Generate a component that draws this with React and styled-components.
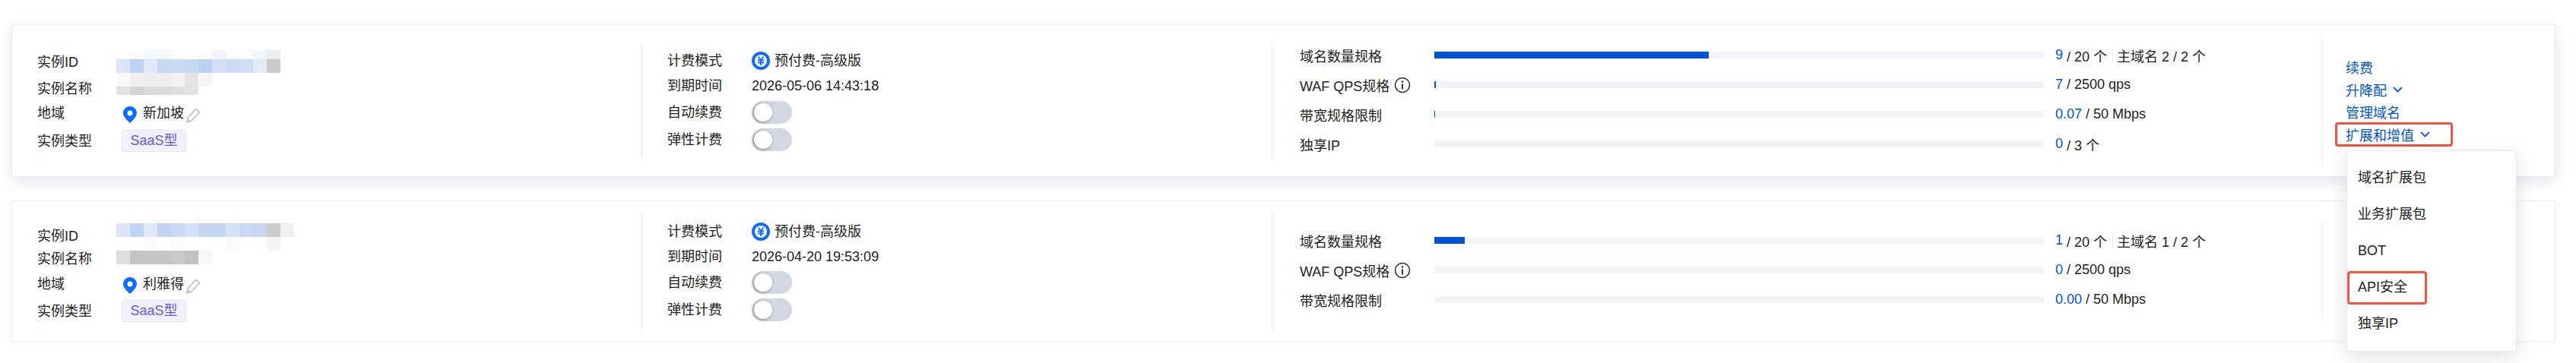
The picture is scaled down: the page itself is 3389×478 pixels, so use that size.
import React from 'react'
import styled, { createGlobalStyle } from 'styled-components'

const GlobalStyle = createGlobalStyle`
  html, body {
    margin: 0;
    padding: 0;
    background: #fff;
  }
  body {
    font-family: "Liberation Sans", "Noto Sans CJK SC", sans-serif;
    font-size: 18px;
    color: #222;
  }
`

const Page = styled.div`
  position: relative;
  width: 3389px;
  height: 478px;
  overflow: hidden;
  box-sizing: border-box;
  padding: 32px 27px 0 15px;
  display: flex;
  flex-direction: column;
  gap: 31px;
`

const Card = styled.section`
  display: flex;
  align-items: center;
  box-sizing: border-box;
  height: ${({ $height }) => $height}px;
  background: #fff;
  border: 1px solid #e9ebf3;
  box-shadow: ${({ $raised }) => ($raised ? '0 6px 18px rgba(40, 50, 90, 0.12)' : 'none')};
`

const Column = styled.div`
  box-sizing: border-box;
  width: ${({ $width }) => $width}px;
  flex: none;
  height: ${({ $height }) => $height}px;
  display: flex;
  flex-direction: column;
  justify-content: center;
  padding-left: ${({ $pad }) => $pad}px;
  ${({ $line }) => $line && 'border-left: 1px solid #e9ebf3;'}
`

const InfoRow = styled.div`
  display: grid;
  grid-template-columns: ${({ $label }) => $label}px 1fr;
  align-items: center;
  height: ${({ $height }) => $height}px;
  margin-bottom: ${({ $gap }) => $gap || 0}px;
  line-height: 24px;
  white-space: nowrap;
`

const Mosaic = styled.div`
  display: flex;
  flex-direction: column;
  align-self: start;
  margin-top: ${({ $offset }) => $offset}px;
`

const MosaicLine = styled.div`
  display: flex;
  height: ${({ $height }) => $height}px;
`

const MosaicCell = styled.span`
  width: 18px;
  height: 100%;
  flex: none;
  background: ${({ $color }) => $color || 'transparent'};
`

const Region = styled.div`
  display: flex;
  align-items: center;
  padding-left: 9px;
`

const RegionName = styled.span`
  margin-left: 8px;
  width: 57px;
`

const PinIcon = styled.svg`
  width: 18px;
  height: 22px;
  flex: none;
  margin-top: 4px;
`

const PencilIcon = styled.svg`
  width: 20px;
  height: 20px;
  flex: none;
  margin-top: 5px;
`

const TypeTag = styled.span`
  justify-self: start;
  margin-left: 7px;
  box-sizing: border-box;
  width: 85px;
  height: 29px;
  line-height: 27px;
  text-align: center;
  background: #f1f0fd;
  border: 1px solid #e6e5f6;
  border-radius: 3px;
  color: #6a5ad6;
`

const Billing = styled.div`
  display: flex;
  align-items: center;
  gap: 6px;
`

const Switch = styled.span`
  position: relative;
  display: block;
  width: 53px;
  height: 30px;
  border-radius: 15px;
  background: #d3d7e1;

  &::after {
    content: '';
    position: absolute;
    left: 3px;
    top: 3px;
    width: 24px;
    height: 24px;
    border-radius: 50%;
    background: #fff;
    box-shadow: -1px 1px 4px rgba(0, 0, 0, 0.4);
  }
`

const QuotaRow = styled.div`
  display: grid;
  grid-template-columns: 177px 802px 1fr;
  align-items: start;
  height: 39px;
  white-space: nowrap;
`

const QuotaLabel = styled.div`
  display: flex;
  align-items: center;
  gap: 6px;
  height: 36px;
`

const Track = styled.div`
  height: 9px;
  margin-top: 13px;
  background: #f2f3f7;
`

const Fill = styled.div`
  height: 100%;
  background: #0052d9;
`

const QuotaValue = styled.div`
  display: flex;
  align-items: center;
  height: 36px;
  padding-left: 15px;
`

const Used = styled.span`
  color: #0052d9;
  margin-right: 5px;
`

const Sep = styled.span`
  width: 1px;
  height: 20px;
  background: #e9ebf3;
  margin: 0 5px 0 7px;
`

const Actions = styled.div`
  display: flex;
  flex-direction: column;
  align-items: flex-start;
  padding-left: 30px;
`

const ActionLink = styled.a`
  position: relative;
  display: flex;
  align-items: center;
  gap: 8px;
  height: 29.4px;
  color: #0052d9;
  white-space: nowrap;
`

const Callout = styled.span`
  position: absolute;
  left: ${({ $left }) => $left}px;
  top: ${({ $top }) => $top}px;
  width: ${({ $width }) => $width}px;
  height: ${({ $height }) => $height}px;
  box-sizing: border-box;
  border: 3px solid #f5523f;
  border-radius: 4px;
  pointer-events: none;
`

const Dropdown = styled.ul`
  position: absolute;
  left: 3087px;
  top: 198px;
  z-index: 2;
  box-sizing: border-box;
  width: 224px;
  height: 265px;
  margin: 0;
  padding: 11px 0 12px;
  list-style: none;
  background: #fff;
  border: 1px solid #e7e9f3;
  box-shadow: 0 8px 24px rgba(40, 50, 90, 0.14);
`

const DropdownItem = styled.li`
  position: relative;
  height: 48px;
  line-height: 48px;
  padding-left: 14px;
  white-space: nowrap;
`

const Pin = () => (
  <PinIcon viewBox="0 0 18 22">
    <path
      fillRule="evenodd"
      fill="#0e6bff"
      d="M9 0C4 0 0 4 0 9c0 5 6 10 9 13 3-3 9-8 9-13 0-5-4-9-9-9zm0 5.5a3.5 3.5 0 1 1 0 7 3.5 3.5 0 0 1 0-7z"
    />
  </PinIcon>
)

const Pencil = () => (
  <PencilIcon viewBox="0 0 20 20" fill="none" stroke="#c4c4c4" strokeWidth="1.8">
    <path d="M1 19l1-6L12.500 1.500l5 4L7 17z" />
    <path d="M1.500 14.500l4 3.500" />
  </PencilIcon>
)

const CoinIcon = () => (
  <svg width="24" height="24" viewBox="0 0 24 24" fill="none">
    <circle cx="12" cy="12" r="12" fill="#0e6bff" />
    <circle cx="12" cy="12" r="8" fill="#fff" />
    <path d="M8.500 6.500l3.500 4.500 3.500-4.500M12 11v7M8 11.500h8M8 14.500h8" stroke="#0e6bff" strokeWidth="1.800" />
  </svg>
)

const InfoIcon = () => (
  <svg width="22" height="22" viewBox="0 0 22 22" fill="none">
    <circle cx="11" cy="11" r="9.500" stroke="#333" strokeWidth="1.600" />
    <path d="M11 9.500v7" stroke="#333" strokeWidth="2" />
    <circle cx="11" cy="6.500" r="1.300" fill="#333" />
  </svg>
)

const Chevron = () => (
  <svg width="13" height="8" viewBox="0 0 13 8" fill="none">
    <path d="M1 1l5.500 5.500L12 1" stroke="#2463df" strokeWidth="2" />
  </svg>
)

const MosaicBlock = ({ lines, offset }) => (
  <Mosaic $offset={offset}>
    {lines.map((line, i) => (
      <MosaicLine key={i} $height={line.height}>
        {line.cells.map((c, j) => (
          <MosaicCell key={j} $color={c} />
        ))}
      </MosaicLine>
    ))}
  </Mosaic>
)

const cards = [
  {
    height: 201,
    raised: true,
    region: '新加坡',
    expire: '2026-05-06 14:43:18',
    idBlur: {
      offset: -2,
      lines: [
        { height: 12, cells: ['', '#fbfcfe', '#f5f8fd', '#f4f7fd', '', '', '', '#eff3fb', '#fbfcfe', '#fbfcfe', '#f2f6fc', '#ececec'] },
        { height: 18, cells: ['#dbe5f8', '#bfd2f3', '#e0e8f8', '#c8d8f3', '#c9d9f4', '#c8d8f3', '#bdd0f1', '#d3dff6', '#cbdbf5', '#d0dcf5', '#e3ebf9', '#cacaca'] },
      ],
    },
    nameBlur: {
      offset: -9,
      lines: [
        { height: 18, cells: ['#f8f8f8', '#f0f0f0', '#ededed', '#ededed', '#f1f1f1', '#e3e3e3', '#f6f6f6'] },
        { height: 11, cells: ['#e4e3e2', '#d2d2d4', '#dadada', '#dadada', '#dfdfdf', '#e2e2e2'] },
      ],
    },
    gaps: [13, 7, 11, 2],
    quotas: [
      { label: '域名数量规格', used: '9', total: '/ 20 个', pct: 45, extra: '主域名 2 / 2 个' },
      { label: 'WAF QPS规格', info: true, used: '7', total: '/ 2500 qps', pct: 0.3 },
      { label: '带宽规格限制', used: '0.07', total: '/ 50 Mbps', pct: 0.15 },
      { label: '独享IP', used: '0', total: '/ 3 个', pct: 0 },
    ],
    actionHeight: 171,
  },
  {
    height: 186,
    raised: false,
    region: '利雅得',
    expire: '2026-04-20 19:53:09',
    idBlur: {
      offset: 2,
      lines: [
        { height: 18, cells: ['#dbe5f8', '#c0d4f3', '#e0e8f8', '#c2d3f2', '#c9d9f4', '#d5e0f6', '#c5d6f3', '#c5d6f3', '#d6e1f7', '#c9d9f4', '#c8d8f4', '#cccccc', '#f0f0f0'] },
        { height: 18, cells: ['', '', '#f8fafe', '', '#fafbfe', '', '', '', '#f8fafe', '', '', '#f4f4f4'] },
      ],
    },
    nameBlur: {
      offset: 2,
      lines: [
        { height: 18, cells: ['#dfdedc', '#c4c4c2', '#c5c5c3', '#c5c5c3', '#c8c9cd', '#c1c1c0', '#f7f7f7'] },
        { height: 5, cells: ['#fafafc', '#fafafc', '#fafafc', '#fafafc', '#fafafc', '#fafafc'] },
      ],
    },
    gaps: [12, 9, 10, 3],
    quotas: [
      { label: '域名数量规格', used: '1', total: '/ 20 个', pct: 5, extra: '主域名 1 / 2 个' },
      { label: 'WAF QPS规格', info: true, used: '0', total: '/ 2500 qps', pct: 0 },
      { label: '带宽规格限制', used: '0.00', total: '/ 50 Mbps', pct: 0 },
    ],
    actionHeight: 131,
  },
]

const InstanceCard = ({ card, children }) => (
  <Card $height={card.height} $raised={card.raised}>
    <Column $width={828} $pad={33}>
      <InfoRow $label={104} $height={24} $gap={card.gaps[0]}>
        <span>实例ID</span>
        <MosaicBlock {...card.idBlur} />
      </InfoRow>
      <InfoRow $label={104} $height={24} $gap={card.gaps[1]}>
        <span>实例名称</span>
        <MosaicBlock {...card.nameBlur} />
      </InfoRow>
      <InfoRow $label={104} $height={24} $gap={card.gaps[2]}>
        <span>地域</span>
        <Region>
          <Pin />
          <RegionName>{card.region}</RegionName>
          <Pencil />
        </Region>
      </InfoRow>
      <InfoRow $label={104} $height={24} $gap={card.gaps[3]}>
        <span>实例类型</span>
        <TypeTag>SaaS型</TypeTag>
      </InfoRow>
    </Column>

    <Column $width={829} $height={153} $pad={33} $line>
      <InfoRow $label={111} $height={33}>
        <span>计费模式</span>
        <Billing>
          <CoinIcon />
          预付费-高级版
        </Billing>
      </InfoRow>
      <InfoRow $label={111} $height={33}>
        <span>到期时间</span>
        <span>{card.expire}</span>
      </InfoRow>
      <InfoRow $label={111} $height={36}>
        <span>自动续费</span>
        <Switch />
      </InfoRow>
      <InfoRow $label={111} $height={36}>
        <span>弹性计费</span>
        <Switch />
      </InfoRow>
    </Column>

    <Column $width={1382} $height={156} $pad={36} $line>
      {card.quotas.map((q) => (
        <QuotaRow key={q.label}>
          <QuotaLabel>
            {q.label}
            {q.info && <InfoIcon />}
          </QuotaLabel>
          <Track>
            <Fill style={{ width: `${q.pct}%` }} />
          </Track>
          <QuotaValue>
            <Used>{q.used}</Used>
            {q.total}
            {q.extra && <Sep />}
            {q.extra}
          </QuotaValue>
        </QuotaRow>
      ))}
    </Column>

    <Column $width={306} $height={card.actionHeight} $pad={0} $line>
      {children}
    </Column>
  </Card>
)

export default function App() {
  return (
    <Page>
      <GlobalStyle />
      <InstanceCard card={cards[0]}>
        <Actions>
          <ActionLink>续费</ActionLink>
          <ActionLink>
            升降配
            <Chevron />
          </ActionLink>
          <ActionLink>管理域名</ActionLink>
          <ActionLink>
            扩展和增值
            <Chevron />
            <Callout $left={-14} $top={-1} $width={155} $height={32} />
          </ActionLink>
        </Actions>
      </InstanceCard>
      <InstanceCard card={cards[1]} />
      <Dropdown>
        <DropdownItem>域名扩展包</DropdownItem>
        <DropdownItem>业务扩展包</DropdownItem>
        <DropdownItem>BOT</DropdownItem>
        <DropdownItem>
          API安全
          <Callout $left={0} $top={3} $width={105} $height={44} />
        </DropdownItem>
        <DropdownItem>独享IP</DropdownItem>
      </Dropdown>
    </Page>
  )
}
